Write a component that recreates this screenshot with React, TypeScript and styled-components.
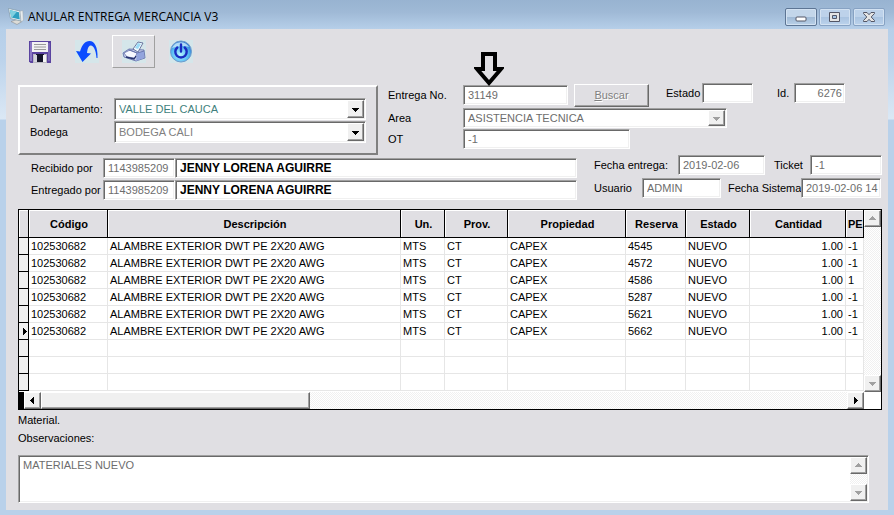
import React from "react";
import styled, { createGlobalStyle, css } from "styled-components";

const GlobalStyle = createGlobalStyle`
  *, *::before, *::after { box-sizing: border-box; }
  body {
    margin: 0;
    font-family: "Liberation Sans", Arial, sans-serif;
    font-size: 11px;
    line-height: 14px;
    color: #000;
  }
  button, input, select, textarea { font: inherit; margin: 0; border-radius: 0; }
`;

const face = "#e0dfe3";

const sunken = css`
  border: 1px solid;
  border-color: #a0a0a0 #fff #fff #a0a0a0;
  box-shadow: inset 1px 1px 0 #696969, inset -1px -1px 0 #f0f0f0;
`;

const raised = css`
  border: 1px solid;
  border-color: #fff #696969 #696969 #fff;
  box-shadow: inset -1px -1px 0 #a0a0a0;
`;

const Window = styled.div`
  min-height: 100vh;
  display: flex;
  flex-direction: column;
  padding: 0 6px 5px;
  background: linear-gradient(
    #98b3d1 0,
    #9fb9d6 12px,
    #b6cfe9 29px,
    #bcd3eb 60px,
    #dbe8f5 119px,
    #b9d1ea 120px
  );
`;

const TitleBar = styled.header`
  display: flex;
  align-items: center;
  gap: 4px;
  height: 29px;
  padding: 4px 3px 0 2px;
`;

const Title = styled.h1`
  flex: 1;
  margin: 0;
  font: 400 12px/18px "Open Sans", "Noto Sans", sans-serif;
`;

const Caption = styled.div`
  display: flex;
  gap: 2px;
`;

const CaptionButton = styled.button<{ $strong?: boolean }>`
  display: grid;
  place-items: center;
  width: 32px;
  height: 18px;
  padding: 0;
  border: 1px solid ${(p) => (p.$strong ? "#5d7594" : "#87a2c3")};
  border-radius: 2px;
  box-shadow: inset 0 0 0 1px #d3e2f2;
  background: ${(p) =>
    p.$strong
      ? "linear-gradient(#c3d6ea 50%, #9fb9d5 50%, #b9d0e8)"
      : "linear-gradient(#bdd2ea 50%, #a9c3e0 50%, #bcd3ec)"};
`;

const Client = styled.main`
  flex: 1;
  padding: 6px 6px 6px 12px;
  background: ${face};
`;

const Toolbar = styled.div`
  display: flex;
  gap: 4px;
`;

const ToolButton = styled.button<{ $framed?: boolean }>`
  display: grid;
  place-items: center;
  width: 43px;
  height: 33px;
  padding: 0;
  background: none;
  border: 1px solid transparent;
  ${(p) => p.$framed && "border-color: #fff #a0a0a0 #a0a0a0 #fff;"}
`;

const Columns = styled.div`
  display: grid;
  grid-template-columns: minmax(360px, 360fr) minmax(490px, 498fr);
  align-items: start;
  column-gap: 10px;
  padding-top: 15px;
`;

const Group = styled.section`
  display: grid;
  grid-template-columns: 84px 1fr;
  align-items: center;
  gap: 1px 0;
  margin-top: 2px;
  height: 70px;
  padding: 11px 10px 10px;
  border: 2px solid;
  border-color: #fff #808080 #808080 #fff;
`;

const Details = styled.section`
  display: flex;
  flex-direction: column;
  gap: 1px;
`;

const Line = styled.div<{ $tall?: boolean }>`
  display: flex;
  align-items: center;
  height: ${(p) => (p.$tall ? 24 : 20)}px;
`;

const Label = styled.label<{ $w?: number }>`
  flex: none;
  white-space: nowrap;
  ${(p) => p.$w && `width: ${p.$w}px;`}
`;

const Field = styled.input<{ $w?: number; $name?: boolean; $right?: boolean }>`
  ${sunken}
  height: 20px;
  min-width: 0;
  padding: 0 2px 0 4px;
  background: #fff;
  color: ${(p) => (p.$name ? "#000" : "#6d6d6d")};
  text-align: ${(p) => (p.$right ? "right" : "left")};
  ${(p) => (p.$w ? `width: ${p.$w}px; flex: none;` : "flex: 1;")}
  ${(p) => p.$name && "font-size: 12px; font-weight: 700;"}
`;

const SelectBox = styled.div<{ $w?: number; $h: number }>`
  display: grid;
  height: ${(p) => p.$h}px;
  ${(p) => p.$w && `width: ${p.$w}px;`}
`;

const SelectInput = styled.select<{ $tone: string }>`
  ${sunken}
  grid-area: 1 / 1;
  appearance: none;
  width: 100%;
  padding: 0 4px;
  background: #fff;
  color: ${(p) => p.$tone};
  opacity: 1;
`;

const DropMark = styled.span`
  ${raised}
  grid-area: 1 / 1;
  justify-self: end;
  display: grid;
  place-items: center;
  width: 17px;
  margin: 2px;
  background: #f0f0f0;
  pointer-events: none;
`;

const SearchButton = styled.button`
  ${raised}
  width: 75px;
  height: 23px;
  margin: 0 17px 0 6px;
  padding: 0;
  background: ${face};
  color: #808080;
  text-shadow: 1px 1px 0 #fff;
`;

const Pair = styled.div<{ $gap: number; $after?: number }>`
  display: flex;
  align-items: center;
  align-self: flex-start;
  gap: ${(p) => p.$gap}px;
  margin-right: ${(p) => p.$after ?? 0}px;
`;

const Pointed = styled.div`
  position: relative;
  display: flex;
`;

const Pointer = styled.svg`
  position: absolute;
  left: 11px;
  bottom: 18px;
`;

const People = styled.div`
  display: flex;
  justify-content: space-between;
  gap: 17px;
`;

const PeopleNames = styled.section`
  flex: 1;
  display: flex;
  flex-direction: column;
  gap: 2px;
  padding: 3px 0 0 13px;
`;

const PeopleInfo = styled.section`
  flex: none;
  width: 288px;
  display: flex;
  flex-direction: column;
  gap: 3px;
`;

const GridFrame = styled.section`
  display: grid;
  grid-template-columns: minmax(0, 1fr) 17px;
  grid-template-rows: 182px 17px;
  margin-top: 9px;
  border: 1px solid #000;
  background: #fff;
`;

const Viewport = styled.div`
  overflow: hidden;
`;

const Table = styled.table`
  width: 100%;
  table-layout: fixed;
  border-collapse: separate;
  border-spacing: 0;
`;

const Head = styled.th`
  height: 28px;
  padding: 0 0 0 2px;
  overflow: hidden;
  white-space: nowrap;
  background: ${face};
  border: solid #000;
  border-width: 0 1px 1px 0;
  box-shadow: inset 1px 1px 0 #fff;
  font-weight: 700;
`;

const Cell = styled.td<{ $right?: boolean }>`
  height: 17px;
  padding: 0 2px;
  overflow: hidden;
  white-space: nowrap;
  border: solid #e6e6e6;
  border-width: 0 1px 1px 0;
  text-align: ${(p) => (p.$right ? "right" : "left")};
`;

const Marker = styled.td`
  height: 17px;
  padding: 0;
  background: #f0f0f0;
  border: solid #000;
  border-width: 0 1px 1px 0;
  text-align: right;
  line-height: 0;
`;

const track = css`
  background: repeating-conic-gradient(#fff 0 25%, #f0f0f0 0 50%) 0 0 / 2px 2px;
`;

const VTrack = styled.div`
  ${track}
  display: flex;
  flex-direction: column;
  justify-content: space-between;
`;

const HTrack = styled.div`
  ${track}
  display: flex;
  border-left: 5px solid #000;
`;

const Thumb = styled.div`
  ${raised}
  width: 32%;
  margin-right: auto;
  background: #f0f0f0;
`;

const ScrollButton = styled.button`
  ${raised}
  flex: none;
  display: grid;
  place-items: center;
  width: 17px;
  height: 17px;
  padding: 0;
  background: #f0f0f0;
`;

const Notes = styled.section`
  display: flex;
  flex-direction: column;
  gap: 4px;
  padding-top: 3px;
`;

const Memo = styled.div`
  ${sunken}
  display: flex;
  height: 48px;
  margin: 6px 13px 0 0;
  padding: 1px;
  background: #fff;
`;

const MemoText = styled.textarea`
  flex: 1;
  padding: 1px 3px;
  border: 0;
  outline: 0;
  resize: none;
  overflow: hidden;
  background: none;
  color: #6d6d6d;
`;

type Dir = "up" | "down" | "left" | "right";
const arrows: Record<Dir, string> = {
  up: "M0 5H7L3.5 1Z",
  down: "M0 2H7L3.5 6Z",
  left: "M5 0V7L1 3.5Z",
  right: "M2 0V7L6 3.5Z",
};

const Arrow = ({ dir, color = "#000" }: { dir: Dir; color?: string }) => (
  <svg width="7" height="7" viewBox="0 0 7 7" shapeRendering="crispEdges" aria-hidden="true">
    <path d={arrows[dir]} fill={color} />
  </svg>
);

const AppIcon = () => (
  <svg width="16" height="17" viewBox="0 0 16 17" aria-hidden="true">
    <path d="M3 13.500l6-2 5 2-5 3z" fill="#dcdcd8" stroke="#8b8f92" strokeWidth=".6" />
    <path d="M.5 .5l11.500 2.500 1 10L2.500 10.500z" fill="#f4f7f8" stroke="#7c96a5" strokeWidth=".7" />
    <path d="M1.800 2l9.200 2.200 .8 7.300-8.500-2z" fill="#2d9fc0" />
    <path d="M1.800 2l7 1.700-4.800 6-.7-.2z" fill="#7fd0e0" />
    <path d="M12 3.200l2.800-.7.600 10-2.400 1.200z" fill="#e8ecee" stroke="#99a5ad" strokeWidth=".5" />
  </svg>
);

const SaveIcon = () => (
  <svg width="22" height="22" viewBox="0 0 22 22" aria-hidden="true">
    <path d="M0 0h22v22H1.500L0 20.500z" fill="#5a43a0" />
    <path d="M1 1h2v19H1z" fill="#8b78c4" />
    <path d="M19 2h2v18h-2z" fill="#7765b4" />
    <path d="M3 1h16v10H3z" fill="#f3f3f3" />
    <path d="M5 3.500h12M5 6h12M5 8.500h12" stroke="#9a9a9a" />
    <path d="M4 13h14v9H4z" fill="#b9b9c2" />
    <path d="M7 13h8v8H7z" fill="#15152b" />
    <path d="M5 14h3v7H5z" fill="#d4d4dc" />
    <path d="M14 14h3v7h-3z" fill="#f5f5f5" />
  </svg>
);

const UndoIcon = () => (
  <svg width="24" height="23" viewBox="0 0 24 23" aria-hidden="true">
    <path d="M0 0h24v23H0z" fill="#d5e6ea" />
    <path d="M1 11l4 .5C7 5 10 1 14.500 1c5 0 8.500 6 8 17h-1C21 10 18.500 5 15.500 5.500c-2.500 .5-3 4-3.500 7.500l4 .5L7.500 22z" fill="#0a4cff" />
  </svg>
);

const PrintIcon = () => (
  <svg width="24" height="23" viewBox="0 0 24 23" aria-hidden="true">
    <path d="M0 0h24v23H0z" fill="#d5e6ea" />
    <path d="M1 13l6-4 15 1 1 8-9 3-12-4z" fill="#c3cbe9" stroke="#5967a3" strokeWidth=".8" />
    <path d="M2 13l6-3 7 3-2 5-8-1z" fill="#f7f9ff" stroke="#5967a3" strokeWidth=".7" />
    <path d="M15 13l7-2v7l-8 3z" fill="#92a4dd" />
    <path d="M11 9l5-7 5 1-5 9z" fill="#f2fbff" stroke="#4d5a8a" strokeWidth=".8" />
    <path d="M13 8l3-5 3 1-3 5z" fill="#9cdcf7" />
    <path d="M4 17l8 2 2-3" fill="none" stroke="#27336e" strokeWidth="1.3" />
    <path d="M7 10l8 3 7-2" fill="none" stroke="#5967a3" strokeWidth=".8" />
  </svg>
);

const PowerIcon = () => (
  <svg width="24" height="23" viewBox="0 0 24 23" aria-hidden="true">
    <defs>
      <radialGradient id="glass" cx=".45" cy=".65" r=".65">
        <stop offset="0" stopColor="#b5f3ff" />
        <stop offset=".6" stopColor="#58bdf3" />
        <stop offset="1" stopColor="#2b72cf" />
      </radialGradient>
    </defs>
    <path d="M0 0h24v23H0z" fill="#d5e6ea" />
    <circle cx="12" cy="11.5" r="10.5" fill="url(#glass)" stroke="#6f9bcb" />
    <path d="M3 8a9.500 9.500 0 0 1 17-1c-5-2-11-1-17 1z" fill="#dff6ff" opacity=".7" />
    <path d="M8.300 7.500a5.700 5.700 0 1 0 7.400 0M12 4.500v7" fill="none" stroke="#1a2cc0" strokeWidth="2.4" strokeLinecap="round" />
  </svg>
);

const Drop = ({ dim }: { dim?: boolean }) => (
  <DropMark>
    <Arrow dir="down" color={dim ? "#a0a0a0" : "#000"} />
  </DropMark>
);

type ComboProps = { id: string; value: string; height: number; width?: number; tone?: string; dim?: boolean };
const Combo = ({ id, value, height, width, tone = "#808080", dim }: ComboProps) => (
  <SelectBox $h={height} $w={width}>
    <SelectInput id={id} $tone={tone} disabled={dim} defaultValue={value}>
      <option>{value}</option>
    </SelectInput>
    <Drop dim={dim} />
  </SelectBox>
);

const columns: [string, number | undefined][] = [
  ["Código", 79],
  ["Descripción", undefined],
  ["Un.", 44],
  ["Prov.", 63],
  ["Propiedad", 118],
  ["Reserva", 60],
  ["Estado", 64],
  ["Cantidad", 96],
  ["PER", 18],
];

const rows = [
  ["4545", "-1"],
  ["4572", "-1"],
  ["4586", "1"],
  ["5287", "-1"],
  ["5621", "-1"],
  ["5662", "-1"],
].map(([reserva, per]) => [
  "102530682",
  "ALAMBRE EXTERIOR DWT PE 2X20 AWG",
  "MTS",
  "CT",
  "CAPEX",
  reserva,
  "NUEVO",
  "1.00",
  per,
]);

const blank = Array.from({ length: 3 }, () => columns.map(() => ""));

const people = [
  { id: "recibido", label: "Recibido por" },
  { id: "entregado", label: "Entregado por" },
];

export default function App() {
  return (
    <Window>
      <GlobalStyle />
      <TitleBar>
        <AppIcon />
        <Title>ANULAR ENTREGA MERCANCIA V3</Title>
        <Caption>
          <CaptionButton $strong aria-label="Minimizar">
            <svg width="12" height="12" viewBox="0 0 12 12">
              <rect x="1" y="6" width="10" height="4" rx="1" fill="#fff" stroke="#535666" />
            </svg>
          </CaptionButton>
          <CaptionButton aria-label="Maximizar">
            <svg width="12" height="10" viewBox="0 0 12 10">
              <path d="M.5 .5h10v9H.5z" fill="#e4e4e4" stroke="#535666" />
              <path d="M3.500 3.500h4v3h-4z" fill="#a9c7e6" stroke="#535666" />
            </svg>
          </CaptionButton>
          <CaptionButton aria-label="Cerrar">
            <svg width="12" height="10" viewBox="0 0 12 10">
              <path d="M.5 .5h3.500L6 2.700 8 .5h3.500v1L8.200 5l3.300 3.500v1H8L6 7.300 4 9.500H.5v-1L3.800 5 .5 1.500z" fill="#e4e4e4" stroke="#535666" />
            </svg>
          </CaptionButton>
        </Caption>
      </TitleBar>

      <Client>
        <Toolbar>
          <ToolButton aria-label="Guardar"><SaveIcon /></ToolButton>
          <ToolButton aria-label="Deshacer"><UndoIcon /></ToolButton>
          <ToolButton $framed aria-label="Imprimir"><PrintIcon /></ToolButton>
          <ToolButton aria-label="Salir"><PowerIcon /></ToolButton>
        </Toolbar>

        <Columns>
          <Group>
            <Label htmlFor="departamento">Departamento:</Label>
            <Combo id="departamento" value="VALLE DEL CAUCA" height={22} tone="#3f7f7c" />
            <Label htmlFor="bodega">Bodega</Label>
            <Combo id="bodega" value="BODEGA CALI" height={22} />
          </Group>

          <Details>
            <Line $tall>
              <Label htmlFor="entrega" $w={75}>Entrega No.</Label>
              <Pointed>
                <Field id="entrega" $w={105} defaultValue="31149" />
                <Pointer width="30" height="36" viewBox="0 0 30 36" aria-hidden="true">
                  <path d="M9 3h12v15h6L15 32 3 18h6z" fill={face} stroke="#000" strokeWidth="4" />
                </Pointer>
              </Pointed>
              <SearchButton><u>B</u>uscar</SearchButton>
              <Pair $gap={1} $after={24}>
                <Label htmlFor="estado" $w={35}>Estado</Label>
                <Field id="estado" $w={51} defaultValue="" />
              </Pair>
              <Pair $gap={2}>
                <Label htmlFor="ident" $w={15}>Id.</Label>
                <Field id="ident" $w={51} $right defaultValue="6276" />
              </Pair>
            </Line>
            <Line>
              <Label htmlFor="area" $w={75}>Area</Label>
              <Combo id="area" value="ASISTENCIA TECNICA" height={20} width={264} tone="#6d6d6d" dim />
            </Line>
            <Line>
              <Label htmlFor="ot" $w={75}>OT</Label>
              <Field id="ot" $w={167} defaultValue="-1" />
            </Line>
          </Details>
        </Columns>

        <People>
          <PeopleNames>
            {people.map((p) => (
              <Line key={p.id}>
                <Label htmlFor={p.id} $w={72}>{p.label}</Label>
                <Field id={p.id} $w={72} defaultValue="1143985209" />
                <Field $name aria-label={`${p.label}, nombre`} defaultValue="JENNY LORENA AGUIRRE" />
              </Line>
            ))}
          </PeopleNames>
          <PeopleInfo>
            <Line>
              <Label htmlFor="fecha" $w={84}>Fecha entrega:</Label>
              <Pair $gap={0} $after={9}>
                <Field id="fecha" $w={87} defaultValue="2019-02-06" />
              </Pair>
              <Label htmlFor="ticket" $w={36}>Ticket</Label>
              <Field id="ticket" $w={72} defaultValue="-1" />
            </Line>
            <Line>
              <Label htmlFor="usuario" $w={48}>Usuario</Label>
              <Pair $gap={0} $after={7}>
                <Field id="usuario" $w={79} defaultValue="ADMIN" />
              </Pair>
              <Label htmlFor="sistema" $w={73}>Fecha Sistema</Label>
              <Field id="sistema" $w={80} defaultValue="2019-02-06 14" />
            </Line>
          </PeopleInfo>
        </People>

        <GridFrame>
          <Viewport>
            <Table>
              <colgroup>
                <col width={10} />
                {columns.map(([name, width]) => (
                  <col key={name} width={width} />
                ))}
              </colgroup>
              <thead>
                <tr>
                  <Head aria-label="Fila actual" />
                  {columns.map(([name]) => (
                    <Head key={name} scope="col">{name}</Head>
                  ))}
                </tr>
              </thead>
              <tbody>
                {[...rows, ...blank].map((row, r) => (
                  <tr key={r}>
                    <Marker>{r === rows.length - 1 && <Arrow dir="right" />}</Marker>
                    {row.map((text, c) => (
                      <Cell key={c} $right={c === 7}>{text}</Cell>
                    ))}
                  </tr>
                ))}
              </tbody>
            </Table>
          </Viewport>
          <VTrack>
            <ScrollButton aria-label="Subir"><Arrow dir="up" color="#a0a0a0" /></ScrollButton>
            <ScrollButton aria-label="Bajar"><Arrow dir="down" color="#a0a0a0" /></ScrollButton>
          </VTrack>
          <HTrack>
            <ScrollButton aria-label="Izquierda"><Arrow dir="left" /></ScrollButton>
            <Thumb />
            <ScrollButton aria-label="Derecha"><Arrow dir="right" /></ScrollButton>
          </HTrack>
        </GridFrame>

        <Notes>
          <Label as="span">Material.</Label>
          <Label htmlFor="observaciones">Observaciones:</Label>
          <Memo>
            <MemoText id="observaciones" defaultValue="MATERIALES NUEVO" />
            <VTrack>
              <ScrollButton aria-label="Subir texto"><Arrow dir="up" color="#a0a0a0" /></ScrollButton>
              <ScrollButton aria-label="Bajar texto"><Arrow dir="down" color="#a0a0a0" /></ScrollButton>
            </VTrack>
          </Memo>
        </Notes>
      </Client>
    </Window>
  );
}
